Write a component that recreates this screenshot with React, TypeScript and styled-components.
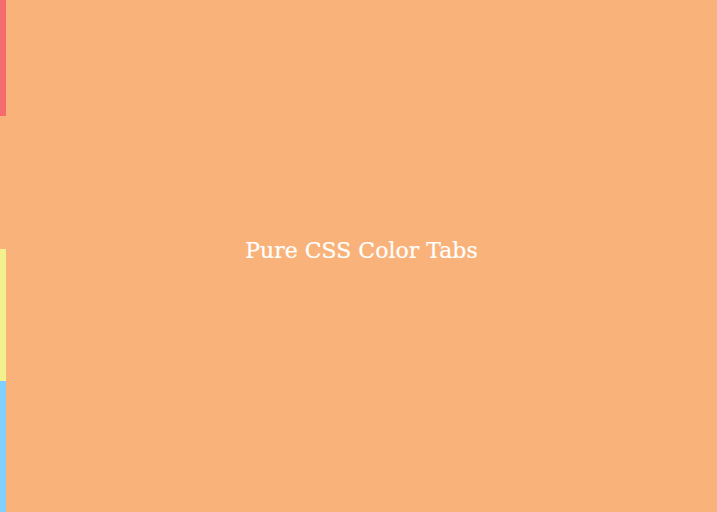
import React from 'react';
import styled, {createGlobalStyle} from 'styled-components';

const GlobalStyle = createGlobalStyle`
    html, body, #root {
        margin: 0;
        height: 100%;
    }
    body {
        background-color: #f9b37a;
        font-family: 'DejaVu Serif', 'Liberation Serif', serif;
    }
`;

const tabs = [
    {color: '#f36b6e', height: 116},
    {color: '#f9b37a', height: 133},
    {color: '#f4f08e', height: 132},
    {color: '#80cfff', height: 131},
];

const App = () => {
    return (
        <>
            <GlobalStyle />
            <Page>
                <TabColumn>
                    {tabs.map(t => (
                        <Tab key={t.color} color={t.color} size={t.height} />
                    ))}
                </TabColumn>
                <Content>
                    <Title>Pure CSS Color Tabs</Title>
                </Content>
            </Page>
        </>
    );
};

export default App;

const Page = styled.div`
    width: 100%;
    height: 512px;
    display: flex;
    background-color: #f9b37a;
    overflow: hidden;
`;

const TabColumn = styled.div`
    width: 6px;
    display: flex;
    flex-direction: column;
`;

const Tab = styled.div<{color: string; size: number}>`
    width: 6px;
    height: ${props => props.size}px;
    flex-shrink: 0;
    background-color: ${props => props.color};
`;

const Content = styled.div`
    flex: 1;
    display: flex;
    align-items: center;
    justify-content: center;
    padding-bottom: 12px;
`;

const Title = styled.h1`
    margin: 0;
    color: #ffffff;
    font-size: 22px;
    font-weight: 400;
    -webkit-text-stroke: 0.2px #ffffff;
`;
